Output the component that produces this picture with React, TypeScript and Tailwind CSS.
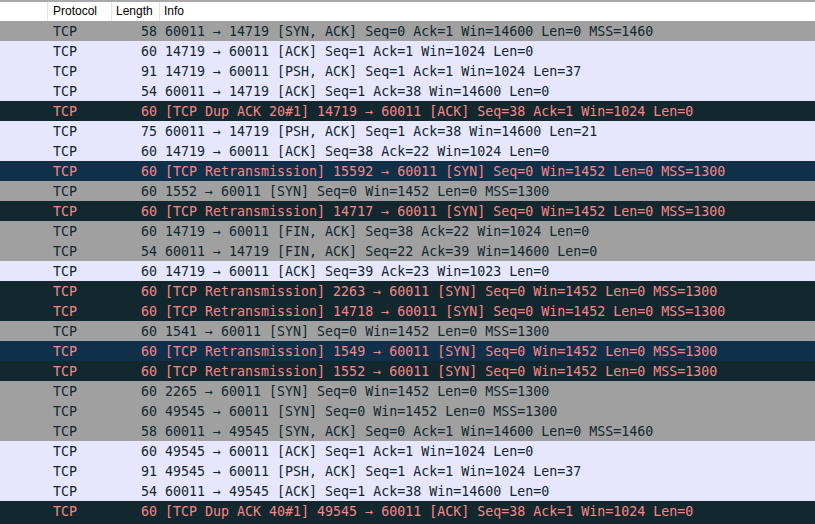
import React from "react";

type Kind = "gray" | "lav" | "dark" | "blue";

const rows: [Kind, string, string][] = [
  ["gray", "58", "60011 → 14719 [SYN, ACK] Seq=0 Ack=1 Win=14600 Len=0 MSS=1460"],
  ["lav", "60", "14719 → 60011 [ACK] Seq=1 Ack=1 Win=1024 Len=0"],
  ["lav", "91", "14719 → 60011 [PSH, ACK] Seq=1 Ack=1 Win=1024 Len=37"],
  ["lav", "54", "60011 → 14719 [ACK] Seq=1 Ack=38 Win=14600 Len=0"],
  ["dark", "60", "[TCP Dup ACK 20#1] 14719 → 60011 [ACK] Seq=38 Ack=1 Win=1024 Len=0"],
  ["lav", "75", "60011 → 14719 [PSH, ACK] Seq=1 Ack=38 Win=14600 Len=21"],
  ["lav", "60", "14719 → 60011 [ACK] Seq=38 Ack=22 Win=1024 Len=0"],
  ["blue", "60", "[TCP Retransmission] 15592 → 60011 [SYN] Seq=0 Win=1452 Len=0 MSS=1300"],
  ["gray", "60", "1552 → 60011 [SYN] Seq=0 Win=1452 Len=0 MSS=1300"],
  ["dark", "60", "[TCP Retransmission] 14717 → 60011 [SYN] Seq=0 Win=1452 Len=0 MSS=1300"],
  ["gray", "60", "14719 → 60011 [FIN, ACK] Seq=38 Ack=22 Win=1024 Len=0"],
  ["gray", "54", "60011 → 14719 [FIN, ACK] Seq=22 Ack=39 Win=14600 Len=0"],
  ["lav", "60", "14719 → 60011 [ACK] Seq=39 Ack=23 Win=1023 Len=0"],
  ["dark", "60", "[TCP Retransmission] 2263 → 60011 [SYN] Seq=0 Win=1452 Len=0 MSS=1300"],
  ["dark", "60", "[TCP Retransmission] 14718 → 60011 [SYN] Seq=0 Win=1452 Len=0 MSS=1300"],
  ["gray", "60", "1541 → 60011 [SYN] Seq=0 Win=1452 Len=0 MSS=1300"],
  ["blue", "60", "[TCP Retransmission] 1549 → 60011 [SYN] Seq=0 Win=1452 Len=0 MSS=1300"],
  ["dark", "60", "[TCP Retransmission] 1552 → 60011 [SYN] Seq=0 Win=1452 Len=0 MSS=1300"],
  ["gray", "60", "2265 → 60011 [SYN] Seq=0 Win=1452 Len=0 MSS=1300"],
  ["gray", "60", "49545 → 60011 [SYN] Seq=0 Win=1452 Len=0 MSS=1300"],
  ["gray", "58", "60011 → 49545 [SYN, ACK] Seq=0 Ack=1 Win=14600 Len=0 MSS=1460"],
  ["lav", "60", "49545 → 60011 [ACK] Seq=1 Ack=1 Win=1024 Len=0"],
  ["lav", "91", "49545 → 60011 [PSH, ACK] Seq=1 Ack=1 Win=1024 Len=37"],
  ["lav", "54", "60011 → 49545 [ACK] Seq=1 Ack=38 Win=14600 Len=0"],
  ["dark", "60", "[TCP Dup ACK 40#1] 49545 → 60011 [ACK] Seq=38 Ack=1 Win=1024 Len=0"],
];

const kindClass: Record<Kind, string> = {
  gray: "bg-[#a0a0a0] text-[#12272e]",
  lav: "bg-[#e7e6ff] text-[#12272e]",
  dark: "bg-[#12272e] text-[#f78787]",
  blue: "bg-[#10304a] text-[#f78787]",
};

export default function App() {
  return (
    <div className="w-[815px] h-[524px] overflow-hidden bg-white flex flex-col">
      <div className="flex h-[21px] shrink-0 border-t-2 border-[#a9a9a9] bg-white text-[12px] text-black font-['Liberation_Sans',Arial,sans-serif] leading-[19px]">
        <div className="w-[48px] border-r border-[#e5e5e5]" />
        <div className="w-[64px] pl-[5px] border-r border-[#e5e5e5]">Protocol</div>
        <div className="w-[48px] pl-[4px] border-r border-[#e5e5e5]">Length</div>
        <div className="flex-1 pl-[4px]">Info</div>
      </div>
      <div className="font-['DejaVu_Sans_Mono',monospace] text-[13.3px] shrink-0">
        {rows.map(([k, len, info], i) => (
          <div key={i} className={`flex h-[20px] pt-[2px] items-center whitespace-pre ${kindClass[k]}`}>
            <div className="w-[48px] shrink-0" />
            <div className="w-[64px] shrink-0 pl-[5px]">TCP</div>
            <div className="w-[48px] shrink-0 text-right pr-[3px]">{len}</div>
            <div className="flex-1 pl-[5px]">{info}</div>
          </div>
        ))}
      </div>
      <div className="flex-1 bg-[#12272e]" />
    </div>
  );
}
